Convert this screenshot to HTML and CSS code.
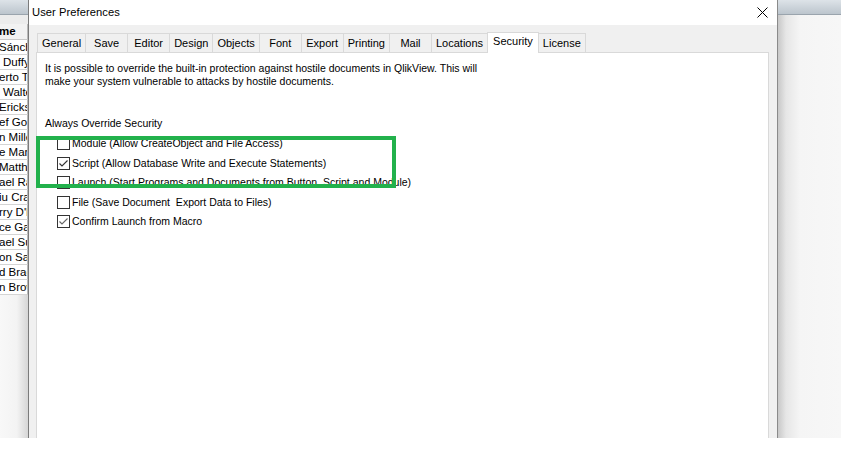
FILE: index.html
```html
<!DOCTYPE html>
<html lang="en">
<head>
<meta charset="utf-8">
<title>User Preferences</title>
<link rel="stylesheet" href="styles.css">
</head>
<body>
<div class="screen">
  <div class="app-left">
    <div class="app-hdr"></div>
    <div class="app-band"></div>
    <div class="col-head">me</div>
    <div class="rows">
      <div class="row">Sánch</div>
      <div class="row ind">Duffy</div>
      <div class="row">erto Ta</div>
      <div class="row ind">Walte</div>
      <div class="row">Ericksc</div>
      <div class="row">ef Gol</div>
      <div class="row">n Mille</div>
      <div class="row">e Marg</div>
      <div class="row">Matthe</div>
      <div class="row">ael Ra</div>
      <div class="row">iu Cra</div>
      <div class="row">rry D'H</div>
      <div class="row">ce Galv</div>
      <div class="row">ael Su</div>
      <div class="row">on Sal</div>
      <div class="row">d Brac</div>
      <div class="row">n Brow</div>
    </div>
    <div class="app-rest"></div>
  </div>

  <div class="dialog">
    <div class="titlebar">
      <span class="title">User Preferences</span>
      <svg class="close" width="11" height="11" viewBox="0 0 11 11">
        <path d="M0.5 0.5 L10.5 10.5 M10.5 0.5 L0.5 10.5" stroke="#000" stroke-width="1" fill="none"/>
      </svg>
    </div>
    <div class="dlg-body">
      <div class="tabs">
        <div class="tab">General</div>
        <div class="tab">Save</div>
        <div class="tab">Editor</div>
        <div class="tab">Design</div>
        <div class="tab">Objects</div>
        <div class="tab">Font</div>
        <div class="tab">Export</div>
        <div class="tab">Printing</div>
        <div class="tab">Mail</div>
        <div class="tab">Locations</div>
        <div class="tab active">Security</div>
        <div class="tab">License</div>
      </div>
      <div class="panel">
        <p class="intro">It is possible to override the built-in protection against hostile documents in QlikView. This will<br>make your system vulnerable to attacks by hostile documents.</p>
        <div class="group-label">Always Override Security</div>
        <ul class="checks">
          <li class="check"><span class="box"></span><span>Module (Allow CreateObject and File Access)</span></li>
          <li class="check"><span class="box"><svg width="11" height="11" viewBox="0 0 11 11"><path d="M1.5 5.5 L4 8 L9.5 2.5" stroke="#333" stroke-width="1.1" fill="none"/></svg></span><span>Script (Allow Database Write and Execute Statements)</span></li>
          <li class="check"><span class="box"></span><span>Launch (Start Programs and Documents from Button, Script and Module)</span></li>
          <li class="check"><span class="box"></span><span>File (Save Document&nbsp; Export Data to Files)</span></li>
          <li class="check"><span class="box"><svg width="11" height="11" viewBox="0 0 11 11"><path d="M1.5 5.5 L4 8 L9.5 2.5" stroke="#666" stroke-width="1.1" fill="none"/></svg></span><span>Confirm Launch from Macro</span></li>
        </ul>
      </div>
    </div>
  </div>

  <div class="app-right">
    <div class="app-hdr"></div>
    <div class="app-right-body"></div>
  </div>
</div>
<div class="highlight"></div>
</body>
</html>
```

FILE: styles.css
```css
html, body {
  margin: 0;
  padding: 0;
  background: #ffffff;
}
body {
  width: 841px;
  height: 460px;
  overflow: hidden;
  position: relative;
  font-family: "Liberation Sans", Arial, sans-serif;
  color: #000;
}
.screen {
  display: flex;
  height: 438px;
}

/* background application, left */
.app-left {
  width: 28px;
  display: flex;
  flex-direction: column;
  overflow: hidden;
  background: linear-gradient(to right, #f8f8f8 0%, #f3f3f3 60%, #d6d6d6 100%);
}
.app-hdr {
  height: 14px;
  flex: none;
  background: linear-gradient(to bottom, #dde3e8, #bcc5cd);
  border-bottom: 1px solid #9aa4ad;
}
.app-band {
  height: 9px;
  flex: none;
  background: #ececec;
}
.col-head {
  height: 15px;
  flex: none;
  font-size: 11.5px;
  font-weight: bold;
  line-height: 15px;
  background: #f2f2f2;
  border-bottom: 1px solid #c9c9c9;
  border-right: 1px solid #b9b9b9;
  white-space: nowrap;
  text-indent: -1px;
}
.rows {
  flex: none;
}
.row {
  height: 14px;
  line-height: 14px;
  font-size: 11.5px;
  white-space: nowrap;
  overflow: hidden;
  background: #fff;
  border-bottom: 1px solid #d4d4d4;
  border-right: 1px solid #b9b9b9;
  text-indent: -1px;
}
.row.ind {
  text-indent: 3px;
}
.app-rest {
  flex: 1;
}

/* dialog */
.dialog {
  width: 748px;
  border-left: 1px solid #7b7b7b;
  border-right: 1px solid #8a8a8a;
  display: flex;
  flex-direction: column;
  background: #f0f0f0;
}
.titlebar {
  height: 25px;
  flex: none;
  background: #fff;
  display: flex;
  align-items: center;
  justify-content: space-between;
  padding: 0 9px 0 3px;
}
.title {
  font-size: 11.2px;
  letter-spacing: 0.05px;
  margin-top: -1px;
}
.close {
  display: block;
  margin-top: -1px;
}
.dlg-body {
  flex: 1;
  display: flex;
  flex-direction: column;
  padding: 7px 8px 0 7px;
}
.tabs {
  display: flex;
  align-items: flex-end;
  height: 20px;
  padding-left: 1px;
}
.tab {
  box-sizing: border-box;
  height: 19px;
  min-width: 43px;
  padding: 0 4px;
  font-size: 11px;
  line-height: 18px;
  text-align: center;
  background: #f0f0f0;
  border: 1px solid #d9d9d9;
  border-bottom: none;
  margin-right: -1px;
}
.tab.active {
  height: 21px;
  margin-bottom: -1px;
  background: #fff;
  position: relative;
  z-index: 1;
  line-height: 17px;
  padding: 0 5px;
}
.panel {
  flex: 1;
  background: #fff;
  border: 1px solid #d9d9d9;
  border-bottom: none;
  padding: 9px 8px 0 8px;
  font-size: 10.5px;
  line-height: 13px;
}
.intro {
  margin: 0;
}
.group-label {
  margin-top: 29px;
}
.checks {
  list-style: none;
  margin: 4px 0 0 12px;
  padding: 0;
}
.check {
  height: 19.5px;
  display: flex;
  align-items: center;
  gap: 2px;
  white-space: nowrap;
}
.box {
  box-sizing: border-box;
  width: 13px;
  height: 13px;
  border: 1px solid #333;
  background: #fff;
  display: flex;
  align-items: center;
  justify-content: center;
  flex: none;
}
.box svg {
  display: block;
}

/* background application, right */
.app-right {
  flex: 1;
  display: flex;
  flex-direction: column;
}
.app-right-body {
  flex: 1;
  background: linear-gradient(to right, #c8c8c8 0px, #e6e6e6 8px, #f5f5f5 22px, #f7f7f7 100%);
}

/* annotation overlay */
.highlight {
  position: absolute;
  left: 36px;
  top: 136px;
  width: 360px;
  height: 52px;
  box-sizing: border-box;
  border: 4px solid #22b14c;
}
```
